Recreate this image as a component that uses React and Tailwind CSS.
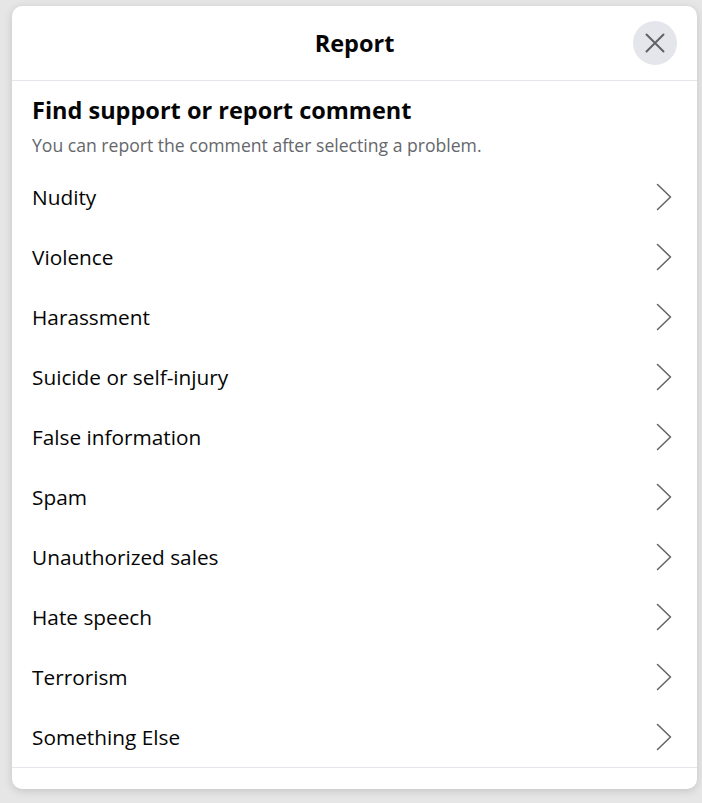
import React from "react";

const items = [
  "Nudity",
  "Violence",
  "Harassment",
  "Suicide or self-injury",
  "False information",
  "Spam",
  "Unauthorized sales",
  "Hate speech",
  "Terrorism",
  "Something Else",
];

function Chevron() {
  return (
    <svg width="16" height="28" viewBox="0 0 16 28" fill="none" className="shrink-0">
      <path d="M1.5 1.5 L14.5 14 L1.5 26.5" stroke="#65676b" strokeWidth="1.6" strokeLinecap="round" strokeLinejoin="round" />
    </svg>
  );
}

export default function App() {
  return (
    <div
      className="w-[702px] h-[803px] bg-[#e6e6e6] pt-[6px] pl-[12px]"
      style={{ fontFamily: '"Open Sans", "Noto Sans", sans-serif' }}
    >
      <div className="w-[685px] h-[783px] bg-white rounded-[10px] shadow-[0_2px_8px_rgba(0,0,0,0.15)] flex flex-col">
        <div className="relative h-[75px] flex items-center justify-center border-b border-[#e4e6eb]">
          <div className="text-[23.5px] font-bold text-[#050505] leading-[30px]">Report</div>
          <button className="absolute right-[20px] top-[15px] w-[44px] h-[44px] rounded-full bg-[#e4e6eb] flex items-center justify-center">
            <svg width="20" height="20" viewBox="0 0 20 20">
              <path d="M1.5 1.5 L18.5 18.5 M18.5 1.5 L1.5 18.5" stroke="#606266" strokeWidth="2" strokeLinecap="round" />
            </svg>
          </button>
        </div>
        <div className="px-[20px] pt-[14px]">
          <div className="text-[23.5px] font-bold text-[#050505] leading-[30px]">Find support or report comment</div>
          <div className="text-[17.6px] text-[#65676b] leading-[24px] mt-[8px]">You can report the comment after selecting a problem.</div>
        </div>
        <div className="flex flex-col mt-[10px] border-b border-[#e4e6eb]">
          {items.map((t) => (
            <div key={t} className="h-[60px] flex items-center justify-between pl-[20px] pr-[25px]">
              <span className="text-[20.8px] text-[#050505] leading-[28px]">{t}</span>
              <Chevron />
            </div>
          ))}
        </div>
      </div>
    </div>
  );
}
